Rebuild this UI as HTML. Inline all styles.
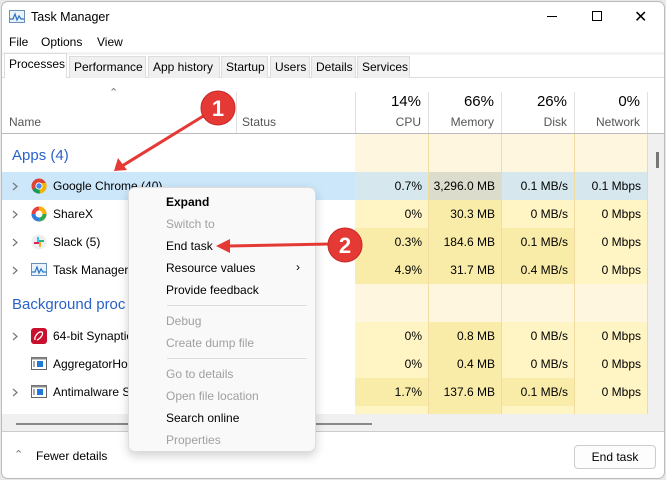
<!DOCTYPE html>
<html><head><meta charset="utf-8"><style>
*{margin:0;padding:0;box-sizing:border-box}
body{width:666px;height:480px;overflow:hidden;background:#e8e8e8;font-family:"Liberation Sans",sans-serif;font-size:12px;color:#000;position:relative}
.a{position:absolute;white-space:nowrap}
.win{position:absolute;left:1px;top:1px;width:664px;height:478px;background:#fff;border:1px solid #bbb;border-radius:7px;overflow:hidden}
.tab{position:absolute;top:54px;height:22px;background:#f0f0f0;border:1px solid #ddd;border-bottom:none;padding:3px 4px;font-size:12px}
.cell{position:absolute;text-align:right;padding-right:6px;line-height:28px;font-size:12px}
.mi{position:absolute;left:37px;font-size:12px}
.g{color:#a0a0a0}
.nm{position:absolute;left:51px;font-size:12px}
.chev{position:absolute;left:10px}
</style></head><body>
<div class="win">
<svg class="a" style="left:7px;top:8px" width="16" height="13"><rect x="0.5" y="0.5" width="15" height="12" fill="#eaf3fb" stroke="#6a8fb5"/><polyline points="1,9 4,9 6,4 8,10 10,6 12,9 15,9" fill="none" stroke="#2a73c8" stroke-width="1.2"/></svg>
<div class="a" style="left:29px;top:8px;font-size:12.5px">Task Manager</div>
<div class="a" style="left:545px;top:14px;width:10px;height:1px;background:#000"></div>
<div class="a" style="left:590px;top:9px;width:10px;height:10px;border:1px solid #000"></div>
<div class="a" style="left:632px;top:5px;font-size:16px">✕</div>
<div class="a" style="left:7px;top:33px">File</div>
<div class="a" style="left:39px;top:33px">Options</div>
<div class="a" style="left:95px;top:33px">View</div>
<div class="a" style="left:0;top:50px;width:664px;height:3px;background:#f3f3f3"></div>
<div class="a" style="left:0;top:75px;width:664px;height:1px;background:#ddd"></div>
<div class="tab" style="left:2px;top:51px;height:25px;background:#fff;width:63px">Processes</div>
<div class="tab" style="left:67px;width:77px">Performance</div>
<div class="tab" style="left:146px;width:72px">App history</div>
<div class="tab" style="left:219px;width:47px">Startup</div>
<div class="tab" style="left:268px;width:40px">Users</div>
<div class="tab" style="left:309px;width:45px">Details</div>
<div class="tab" style="left:355px;width:53px">Services</div>
<div class="a" style="left:107px;top:84px;color:#777;font-size:11px">&#8963;</div>
<div class="a" style="left:7px;top:113px;color:#555">Name</div>
<div class="a" style="left:240px;top:113px;color:#555">Status</div>
<div class="a" style="left:234px;top:90px;width:1px;height:42px;background:#e0e0e0"></div>
<div class="a" style="left:353px;top:90px;width:1px;height:42px;background:#e0e0e0"></div>
<div class="a" style="left:426px;top:90px;width:1px;height:42px;background:#e0e0e0"></div>
<div class="a" style="left:499px;top:90px;width:1px;height:42px;background:#e0e0e0"></div>
<div class="a" style="left:572px;top:90px;width:1px;height:42px;background:#e0e0e0"></div>
<div class="a" style="left:645px;top:90px;width:1px;height:42px;background:#e0e0e0"></div>
<div class="a" style="left:353px;top:91px;width:66px;text-align:right;font-size:15px">14%</div>
<div class="a" style="left:426px;top:91px;width:66px;text-align:right;font-size:15px">66%</div>
<div class="a" style="left:499px;top:91px;width:66px;text-align:right;font-size:15px">26%</div>
<div class="a" style="left:572px;top:91px;width:66px;text-align:right;font-size:15px">0%</div>
<div class="a" style="left:353px;top:113px;width:66px;text-align:right;color:#555">CPU</div>
<div class="a" style="left:426px;top:113px;width:66px;text-align:right;color:#555">Memory</div>
<div class="a" style="left:499px;top:113px;width:66px;text-align:right;color:#555">Disk</div>
<div class="a" style="left:572px;top:113px;width:66px;text-align:right;color:#555">Network</div>
<div class="a" style="left:0;top:131px;width:664px;height:1px;background:#bbb"></div>
<div class="a" style="left:353px;top:132px;width:293px;height:38px;background:#fff6e0"></div>
<div class="a" style="left:353px;top:282px;width:293px;height:38px;background:#fff6e0"></div>
<div class="a" style="left:0;top:170px;width:353px;height:28px;background:#cce6fa"></div>
<div class="a" style="left:353px;top:170px;width:293px;height:28px;background:#d6e8ee"></div>
<div class="a" style="left:426px;top:170px;width:73px;height:28px;background:#dcdccc"></div>
<div class="a" style="left:353px;top:198px;width:73px;height:28px;background:#fff4c4"></div><div class="a" style="left:426px;top:198px;width:73px;height:28px;background:#f9eca8"></div><div class="a" style="left:499px;top:198px;width:147px;height:28px;background:#fff4c4"></div>
<div class="a" style="left:353px;top:226px;width:293px;height:56px;background:#f9eca8"></div><div class="a" style="left:572px;top:226px;width:74px;height:56px;background:#fff4c4"></div>
<div class="a" style="left:353px;top:320px;width:73px;height:56px;background:#fff4c4"></div><div class="a" style="left:426px;top:320px;width:73px;height:92px;background:#f9eca8"></div><div class="a" style="left:499px;top:320px;width:147px;height:56px;background:#fff4c4"></div>
<div class="a" style="left:353px;top:376px;width:73px;height:36px;background:#f9eca8"></div><div class="a" style="left:499px;top:376px;width:73px;height:36px;background:#f9eca8"></div><div class="a" style="left:572px;top:376px;width:74px;height:36px;background:#fff4c4"></div>
<div class="a" style="left:353px;top:404px;width:73px;height:8px;background:#fff4c4"></div><div class="a" style="left:499px;top:404px;width:73px;height:8px;background:#fff4c4"></div>
<div class="a" style="left:426px;top:132px;width:1px;height:280px;background:#f0dca0"></div>
<div class="a" style="left:499px;top:132px;width:1px;height:280px;background:#f0dca0"></div>
<div class="a" style="left:572px;top:132px;width:1px;height:280px;background:#f0dca0"></div>
<div class="a" style="left:645px;top:132px;width:1px;height:280px;background:#f0dca0"></div>

<div class="a" style="left:10px;top:145px;color:#2a62c8;font-size:15px">Apps (4)</div>
<div class="a" style="left:10px;top:294px;color:#2a62c8;font-size:15px">Background proc</div>

<svg class="chev" style="top:180px" width="6" height="9"><polyline points="1,1 5,4.5 1,8" fill="none" stroke="#777" stroke-width="1.2"/></svg>
<svg class="chev" style="top:208px" width="6" height="9"><polyline points="1,1 5,4.5 1,8" fill="none" stroke="#777" stroke-width="1.2"/></svg>
<svg class="chev" style="top:236px" width="6" height="9"><polyline points="1,1 5,4.5 1,8" fill="none" stroke="#777" stroke-width="1.2"/></svg>
<svg class="chev" style="top:264px" width="6" height="9"><polyline points="1,1 5,4.5 1,8" fill="none" stroke="#777" stroke-width="1.2"/></svg>
<svg class="chev" style="top:330px" width="6" height="9"><polyline points="1,1 5,4.5 1,8" fill="none" stroke="#777" stroke-width="1.2"/></svg>
<svg class="chev" style="top:386px" width="6" height="9"><polyline points="1,1 5,4.5 1,8" fill="none" stroke="#777" stroke-width="1.2"/></svg>
<svg class="a" style="left:29px;top:176px" width="16" height="16"><circle cx="8" cy="8" r="7.5" fill="#db4437"/><path d="M8 8 L1.5 11.8 A7.5 7.5 0 0 0 9 15.4Z" fill="#0f9d58"/><path d="M8 8 L9 15.4 A7.5 7.5 0 0 0 15 5 L8 5Z" fill="#f4b400"/><circle cx="8" cy="8" r="3.6" fill="#fff"/><circle cx="8" cy="8" r="2.7" fill="#4285f4"/></svg>
<svg class="a" style="left:29px;top:204px" width="16" height="16"><circle cx="8" cy="8" r="7.5" fill="#e8423a"/><path d="M8 .5A7.5 7.5 0 0 1 15.5 8L8 8Z" fill="#f7b500"/><path d="M8 8L15.5 8A7.5 7.5 0 0 1 8 15.5Z" fill="#32a852"/><path d="M8 8L8 15.5A7.5 7.5 0 0 1 .5 8Z" fill="#2f7de1"/><circle cx="8" cy="8" r="3.5" fill="#fff"/></svg>
<svg class="a" style="left:29px;top:232px" width="16" height="16"><circle cx="8" cy="8" r="7.5" fill="#eee"/><rect x="6" y="3" width="2" height="5" fill="#36c5f0"/><rect x="8" y="6" width="5" height="2" fill="#2eb67d"/><rect x="8" y="8" width="2" height="5" fill="#ecb22e"/><rect x="3" y="8" width="5" height="2" fill="#e01e5a"/></svg>
<svg class="a" style="left:29px;top:261px" width="16" height="13"><rect x="0.5" y="0.5" width="15" height="12" fill="#eaf3fb" stroke="#6a8fb5"/><polyline points="1,9 4,9 6,4 8,10 10,6 12,9 15,9" fill="none" stroke="#2a73c8" stroke-width="1.2"/></svg>
<svg class="a" style="left:29px;top:326px" width="16" height="16"><rect width="16" height="16" rx="3" fill="#c8102e"/><path d="M4 12C3 8 8 3 11 4C13 6 9 11 6 12" fill="none" stroke="#fff" stroke-width="1.3"/></svg>
<svg class="a" style="left:29px;top:355px" width="16" height="13"><rect x="0.5" y="0.5" width="15" height="12" fill="#fff" stroke="#666"/><rect x="0.5" y="0.5" width="15" height="2" fill="#888"/><rect x="6" y="4" width="6" height="6" fill="#1e7ad6"/><rect x="2" y="4" width="2" height="6" fill="#aaa"/></svg>
<svg class="a" style="left:29px;top:383px" width="16" height="13"><rect x="0.5" y="0.5" width="15" height="12" fill="#fff" stroke="#666"/><rect x="0.5" y="0.5" width="15" height="2" fill="#888"/><rect x="6" y="4" width="6" height="6" fill="#1e7ad6"/><rect x="2" y="4" width="2" height="6" fill="#aaa"/></svg>
<div class="nm a" style="top:177px">Google Chrome (40)</div>
<div class="nm a" style="top:205px">ShareX</div>
<div class="nm a" style="top:233px">Slack (5)</div>
<div class="nm a" style="top:261px">Task Manager</div>
<div class="nm a" style="top:327px">64-bit Synaptics</div>
<div class="nm a" style="top:355px">AggregatorHost</div>
<div class="nm a" style="top:383px">Antimalware Service</div>

<div class="cell a" style="left:353px;top:170px;width:73px">0.7%</div><div class="cell a" style="left:426px;top:170px;width:73px">3,296.0 MB</div><div class="cell a" style="left:499px;top:170px;width:73px">0.1 MB/s</div><div class="cell a" style="left:572px;top:170px;width:73px">0.1 Mbps</div>
<div class="cell a" style="left:353px;top:198px;width:73px">0%</div><div class="cell a" style="left:426px;top:198px;width:73px">30.3 MB</div><div class="cell a" style="left:499px;top:198px;width:73px">0 MB/s</div><div class="cell a" style="left:572px;top:198px;width:73px">0 Mbps</div>
<div class="cell a" style="left:353px;top:226px;width:73px">0.3%</div><div class="cell a" style="left:426px;top:226px;width:73px">184.6 MB</div><div class="cell a" style="left:499px;top:226px;width:73px">0.1 MB/s</div><div class="cell a" style="left:572px;top:226px;width:73px">0 Mbps</div>
<div class="cell a" style="left:353px;top:254px;width:73px">4.9%</div><div class="cell a" style="left:426px;top:254px;width:73px">31.7 MB</div><div class="cell a" style="left:499px;top:254px;width:73px">0.4 MB/s</div><div class="cell a" style="left:572px;top:254px;width:73px">0 Mbps</div>
<div class="cell a" style="left:353px;top:320px;width:73px">0%</div><div class="cell a" style="left:426px;top:320px;width:73px">0.8 MB</div><div class="cell a" style="left:499px;top:320px;width:73px">0 MB/s</div><div class="cell a" style="left:572px;top:320px;width:73px">0 Mbps</div>
<div class="cell a" style="left:353px;top:348px;width:73px">0%</div><div class="cell a" style="left:426px;top:348px;width:73px">0.4 MB</div><div class="cell a" style="left:499px;top:348px;width:73px">0 MB/s</div><div class="cell a" style="left:572px;top:348px;width:73px">0 Mbps</div>
<div class="cell a" style="left:353px;top:376px;width:73px">1.7%</div><div class="cell a" style="left:426px;top:376px;width:73px">137.6 MB</div><div class="cell a" style="left:499px;top:376px;width:73px">0.1 MB/s</div><div class="cell a" style="left:572px;top:376px;width:73px">0 Mbps</div>

<div class="a" style="left:646px;top:132px;width:18px;height:298px;background:#f0f0f0"></div>
<div class="a" style="left:654px;top:150px;width:3px;height:16px;background:#777"></div>
<div class="a" style="left:0;top:412px;width:646px;height:18px;background:#f0f0f0"></div>
<div class="a" style="left:14px;top:421px;width:356px;height:2px;background:#888"></div>
<div class="a" style="left:0;top:429px;width:664px;height:1px;background:#ccc"></div>
<div class="a" style="left:12px;top:446px;color:#777;font-size:11px">&#8963;</div>
<div class="a" style="left:34px;top:447px">Fewer details</div>
<div class="a" style="left:572px;top:443px;width:82px;height:24px;border:1px solid #ccc;border-radius:4px;background:#fdfdfd;text-align:center;line-height:22px">End task</div>
</div>

<div class="a" style="left:128px;top:187px;width:188px;height:265px;background:#f9f9f9;border:1px solid #ddd;border-radius:7px;box-shadow:0 4px 10px rgba(0,0,0,.18)">
<div class="mi" style="top:7px;font-weight:bold">Expand</div>
<div class="mi g" style="top:29px">Switch to</div>
<div class="mi" style="top:51px">End task</div>
<div class="mi" style="top:73px">Resource values</div>
<div class="a" style="left:167px;top:72px;font-size:12px">›</div>
<div class="mi" style="top:95px">Provide feedback</div>
<div class="a" style="left:38px;top:117px;width:140px;height:1px;background:#ddd"></div>
<div class="mi g" style="top:126px">Debug</div>
<div class="mi g" style="top:148px">Create dump file</div>
<div class="a" style="left:38px;top:170px;width:140px;height:1px;background:#ddd"></div>
<div class="mi g" style="top:179px">Go to details</div>
<div class="mi g" style="top:201px">Open file location</div>
<div class="mi" style="top:223px">Search online</div>
<div class="mi g" style="top:245px">Properties</div>
</div>

<svg class="a" style="left:0;top:0" width="666" height="480">
<line x1="205" y1="115" x2="122" y2="166" stroke="#e53935" stroke-width="3"/>
<path d="M114 171 L118 158 L127 170Z" fill="#e53935"/>
<line x1="330" y1="244" x2="228" y2="246" stroke="#e53935" stroke-width="3"/>
<path d="M216 246 L230 239 L230 253Z" fill="#e53935"/>
<circle cx="218" cy="108" r="17" fill="#e53935" stroke="#c62828" stroke-width="1"/>
<circle cx="345" cy="245" r="17" fill="#e53935" stroke="#c62828" stroke-width="1"/>
<text x="218" y="116" text-anchor="middle" fill="#fff" font-family="Liberation Sans" font-weight="bold" font-size="22">1</text>
<text x="345" y="253" text-anchor="middle" fill="#fff" font-family="Liberation Sans" font-weight="bold" font-size="22">2</text>
</svg>
</body></html>
